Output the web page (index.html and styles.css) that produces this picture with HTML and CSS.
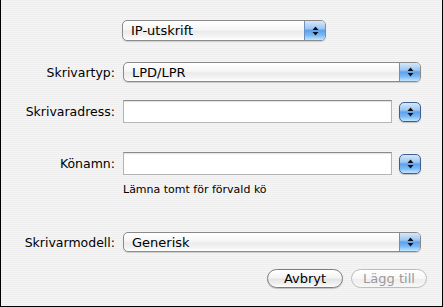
FILE: index.html
```html
<!DOCTYPE html>
<html lang="sv">
<head>
  <meta charset="UTF-8" />
  <title>Lägg till skrivare</title>
  <link rel="stylesheet" href="styles.css">
</head>
<body>

  <div class="sheet">
    <!-- connection type -->
    <div class="top">
      <div class="popup popup-small">
        <span class="popup-text">IP-utskrift</span>
        <span class="popup-arrows">
          <svg width="7" height="10" viewBox="0 0 7 10"><path d="M3.5 0.5 L6.5 4 L0.5 4 Z M0.5 6 L6.5 6 L3.5 9.5 Z" fill="#111"/></svg>
        </span>
      </div>
    </div>

    <div class="row row-type">
      <span class="lbl">Skrivartyp:</span>
      <div class="popup popup-wide">
        <span class="popup-text">LPD/LPR</span>
        <span class="popup-arrows">
          <svg width="7" height="10" viewBox="0 0 7 10"><path d="M3.5 0.5 L6.5 4 L0.5 4 Z M0.5 6 L6.5 6 L3.5 9.5 Z" fill="#111"/></svg>
        </span>
      </div>
    </div>

    <div class="row row-address">
      <span class="lbl">Skrivaradress:</span>
      <div class="field"></div>
      <div class="stepper">
        <svg width="7" height="10" viewBox="0 0 7 10"><path d="M3.5 0.5 L6.5 4 L0.5 4 Z M0.5 6 L6.5 6 L3.5 9.5 Z" fill="#111"/></svg>
      </div>
    </div>

    <div class="row row-queue">
      <span class="lbl">Könamn:</span>
      <div class="field"></div>
      <div class="stepper">
        <svg width="7" height="10" viewBox="0 0 7 10"><path d="M3.5 0.5 L6.5 4 L0.5 4 Z M0.5 6 L6.5 6 L3.5 9.5 Z" fill="#111"/></svg>
      </div>
    </div>
    <div class="hint">Lämna tomt för förvald kö</div>

    <div class="row row-model">
      <span class="lbl">Skrivarmodell:</span>
      <div class="popup popup-wide">
        <span class="popup-text">Generisk</span>
        <span class="popup-arrows">
          <svg width="7" height="10" viewBox="0 0 7 10"><path d="M3.5 0.5 L6.5 4 L0.5 4 Z M0.5 6 L6.5 6 L3.5 9.5 Z" fill="#111"/></svg>
        </span>
      </div>
    </div>

    <div class="buttons">
      <button class="btn">Avbryt</button>
      <button class="btn btn-disabled">Lägg till</button>
    </div>
  </div>

</body>
</html>
```

FILE: styles.css
```css
* {
  box-sizing: border-box;
}

html, body {
  margin: 0;
  padding: 0;
  background: #ececec;
}

.sheet {
  width: 443px;
  height: 307px;
  border: 1px solid #000;
  border-top: none;
  background: repeating-linear-gradient(to bottom, #eeeeee 0, #eeeeee 1px, #f5f5f5 1px, #f5f5f5 2px);
  font-family: "DejaVu Sans", "Liberation Sans", sans-serif;
  font-size: 13px;
  color: #000;
  overflow: hidden;
}

.top {
  padding: 20px 0 0 121px;
}

.row {
  display: flex;
  align-items: center;
}

.lbl {
  width: 114px;
  margin-right: 8px;
  text-align: right;
  font-size: 12.5px;
  white-space: nowrap;
}

.row-type {
  margin-top: 21px;
}

.row-address {
  margin-top: 18px;
}

.row-queue {
  margin-top: 29px;
}

.row-model {
  margin-top: 35px;
}

/* popup menus */
.popup {
  display: flex;
  height: 21px;
  border: 1px solid #8a8a8a;
  border-radius: 5px;
  overflow: hidden;
  background: linear-gradient(to bottom, #ffffff 0%, #f6f6f6 45%, #ebebeb 55%, #f3f3f3 80%, #ffffff 100%);
  box-shadow: 0 1px 1px rgba(0, 0, 0, 0.15);
}

.popup-small {
  width: 204px;
}

.popup-wide {
  width: 298px;
  height: 20px;
}

.popup-text {
  flex: 1;
  padding-left: 8px;
  line-height: 19px;
  font-size: 13px;
}

.popup-arrows {
  width: 21px;
  display: flex;
  align-items: center;
  justify-content: center;
  border-left: 1px solid #6a8fc0;
  background: linear-gradient(to bottom, #d6e8fb 0%, #9cc6f3 40%, #5fa0ea 50%, #7ab9f5 75%, #c2e6ff 100%);
}

/* text fields */
.field {
  width: 269px;
  height: 23px;
  background: #fff;
  border: 1px solid #b4b4b4;
  border-top-color: #8a8a8a;
  box-shadow: inset 0 1px 1px rgba(0, 0, 0, 0.12);
}

.stepper {
  width: 22px;
  height: 20px;
  margin-left: 7px;
  display: flex;
  align-items: center;
  justify-content: center;
  border: 1px solid #3f5f8f;
  border-radius: 5px;
  background: linear-gradient(to bottom, #d6e8fb 0%, #9cc6f3 40%, #5fa0ea 50%, #7ab9f5 75%, #c2e6ff 100%);
  box-shadow: 0 1px 1px rgba(0, 0, 0, 0.2);
}

.hint {
  margin: 8px 0 0 122px;
  font-size: 11px;
  line-height: 14px;
}

/* bottom buttons */
.buttons {
  display: flex;
  justify-content: flex-end;
  gap: 8px;
  margin-top: 17px;
  padding-right: 15px;
}

.btn {
  width: 76px;
  height: 19px;
  padding: 0;
  border: 1px solid #7d7d7d;
  border-radius: 10px;
  font-family: "DejaVu Sans", "Liberation Sans", sans-serif;
  font-size: 13px;
  line-height: 17px;
  color: #000;
  background: linear-gradient(to bottom, #ffffff 0%, #f4f4f4 45%, #e4e4e4 55%, #f2f2f2 85%, #ffffff 100%);
  box-shadow: 0 1px 1px rgba(0, 0, 0, 0.2);
}

.btn-disabled {
  color: #9a9a9a;
  border-color: #bdbdbd;
  background: linear-gradient(to bottom, #ffffff 0%, #f7f7f7 50%, #eeeeee 55%, #f7f7f7 100%);
  box-shadow: none;
}
```
